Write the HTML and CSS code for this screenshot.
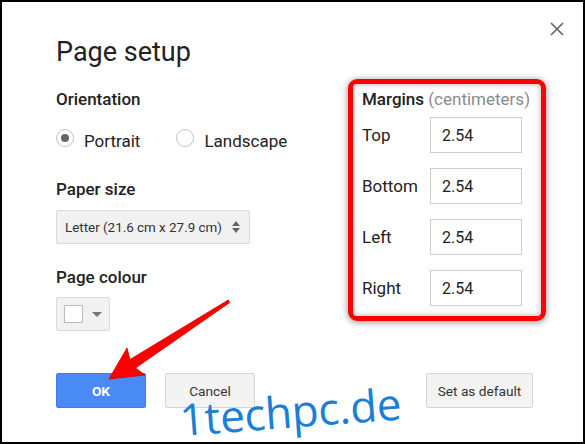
FILE: index.html
```html
<!doctype html>
<html lang="en">
<head>
<meta charset="utf-8">
<title>Page setup</title>
<link rel="stylesheet" href="styles.css">
</head>
<body>

	<div class="frame">

		<div class="dialog">

			<div class="head">
				<h1 class="title">Page setup</h1>
				<span class="close" title="Close">
					<svg width="14" height="14" viewBox="0 0 14 14"><path d="M1 1 L13 13 M13 1 L1 13" stroke="#666" stroke-width="1.7" fill="none"/></svg>
				</span>
			</div>

			<div class="body">

				<div class="left">

					<h2 class="label first">Orientation</h2>
					<div class="radios">
						<label class="opt"><span class="radio on"></span>Portrait</label>
						<label class="opt"><span class="radio"></span>Landscape</label>
					</div>

					<h2 class="label">Paper size</h2>
					<div class="select">
						<span>Letter (21.6 cm x 27.9 cm)</span>
						<svg width="8" height="12" viewBox="0 0 8 12"><path d="M4 0 L8 5 L0 5 Z M0 7 L8 7 L4 12 Z" fill="#666"/></svg>
					</div>

					<h2 class="label after-select">Page colour</h2>
					<div class="colour">
						<span class="swatch"></span>
						<span class="caret"></span>
					</div>

				</div>

				<div class="margins">
					<div class="mhead"><b>Margins</b> <span>(centimeters)</span></div>
					<div class="mrow"><span>Top</span><div class="field">2.54</div></div>
					<div class="mrow"><span>Bottom</span><div class="field">2.54</div></div>
					<div class="mrow"><span>Left</span><div class="field">2.54</div></div>
					<div class="mrow"><span>Right</span><div class="field">2.54</div></div>
				</div>

			</div>

			<div class="foot">
				<button class="btn ok">OK</button>
				<button class="btn">Cancel</button>
				<button class="btn def">Set as default</button>
			</div>

		</div>

		<svg class="arrow" width="585" height="444" viewBox="0 0 585 444">
			<polygon points="109,379 127,348 130,359.5 228.3,300 229.7,302.5 135.5,368 145,375" fill="#f00" stroke="#d00000" stroke-width="0.8" stroke-linejoin="round"/>
		</svg>

		<div class="mark">1techpc.de</div>

	</div>

</body>
</html>
```

FILE: styles.css
```css
/* page setup dialog */

	html, body { margin: 0; background: #fff; }

	body { font-family: Roboto, "Liberation Sans", sans-serif; color: #222; }

	.frame { width: 585px; height: 444px; box-sizing: border-box; border: 2px solid #000; position: relative; overflow: hidden; }

	.dialog { padding: 20px 19px 0 54px; }

	.head { display: flex; justify-content: space-between; align-items: flex-start; }
	.title { font-size: 27px; font-weight: 400; line-height: 32px; margin: 14px 0 0 0; color: #222; }
	.close { display: block; width: 14px; height: 14px; margin-top: 0; cursor: pointer; }
	.close svg { display: block; }

	.body { display: grid; grid-template-columns: 292px 198px; }

	.label { font-size: 17px; font-weight: 500; line-height: 20px; margin: 28px 0 0 0; color: #222; }
	.label.first { margin-top: 21px; }
	.label.after-select { margin-top: 23px; }

	.radios { display: flex; gap: 36px; margin-top: 22px; font-size: 17px; line-height: 20px; }
	.opt { display: flex; gap: 10px; align-items: flex-start; }
	.radio { width: 18px; height: 18px; box-sizing: border-box; border: 1px solid #c4c4c4; border-radius: 50%; margin-top: -2px;
		display: grid; place-items: center; background: #fff; }
	.radio.on::after { content: ""; width: 8px; height: 8px; border-radius: 50%; background: #666; }

	.select { width: 194px; height: 34px; box-sizing: border-box; margin-top: 11px; border: 1px solid #dadada; border-radius: 2px;
		background: #f1f1f1; display: flex; align-items: center; justify-content: space-between; padding: 0 9px 0 8px;
		font-size: 13.4px; color: #333; }

	.colour { width: 54px; height: 34px; box-sizing: border-box; border: 1px solid #dadada; border-radius: 2px; background: #f1f1f1;
		display: flex; align-items: center; gap: 9px; padding-left: 7px; margin-top: 10px; }
	.swatch { width: 19px; height: 18px; box-sizing: border-box; border: 1px solid #bdbdbd; background: #fff; }
	.caret { width: 0; height: 0; border-left: 5px solid transparent; border-right: 5px solid transparent; border-top: 5px solid #777; }

	.margins { margin-top: 11px; height: 242px; box-sizing: border-box; border: 5px solid #f00; border-radius: 9px;
		padding: 5px 19px 0 9px; box-shadow: 0 1px 6px 1px rgba( 0, 0, 0, .35 ), inset 0 0 6px rgba( 0, 0, 0, .3 ); }
	.mhead { font-size: 17px; line-height: 20px; white-space: nowrap; }
	.mhead b { font-weight: 500; color: #222; }
	.mhead span { color: #8a8a8a; }
	.mrow { display: grid; grid-template-columns: 68px 92px; align-items: center; margin-top: 15px; font-size: 17px; }
	.mhead + .mrow { margin-top: 8px; }
	.field { height: 36px; box-sizing: border-box; border: 1px solid #cfcfcf; background: #fff; padding-left: 11px;
		display: flex; align-items: center; font-size: 16px; color: #222; }

	.foot { display: flex; gap: 19px; margin-top: 42px; }
	.btn { height: 35px; width: 90px; box-sizing: border-box; border: 1px solid #d6d6d6; border-radius: 2px; background: #f3f3f3;
		font-family: Roboto, "Liberation Sans", sans-serif; font-size: 13.7px; color: #333; padding: 0; }
	.btn.ok { background: #4a8af4; border-color: #3d7de8; color: #fff; font-weight: 700; }
	.btn.def { width: 107px; margin-left: auto; margin-right: 31px; }

	.arrow { position: absolute; left: -2px; top: -2px; pointer-events: none; }

	.mark { position: absolute; left: 179px; top: 395px; font-family: "Open Sans", sans-serif; font-size: 44px; line-height: 44px;
		letter-spacing: -0.3px; color: #1a7fd6; transform: rotate( -4.3deg ); transform-origin: 0 39px; white-space: nowrap; }
```
